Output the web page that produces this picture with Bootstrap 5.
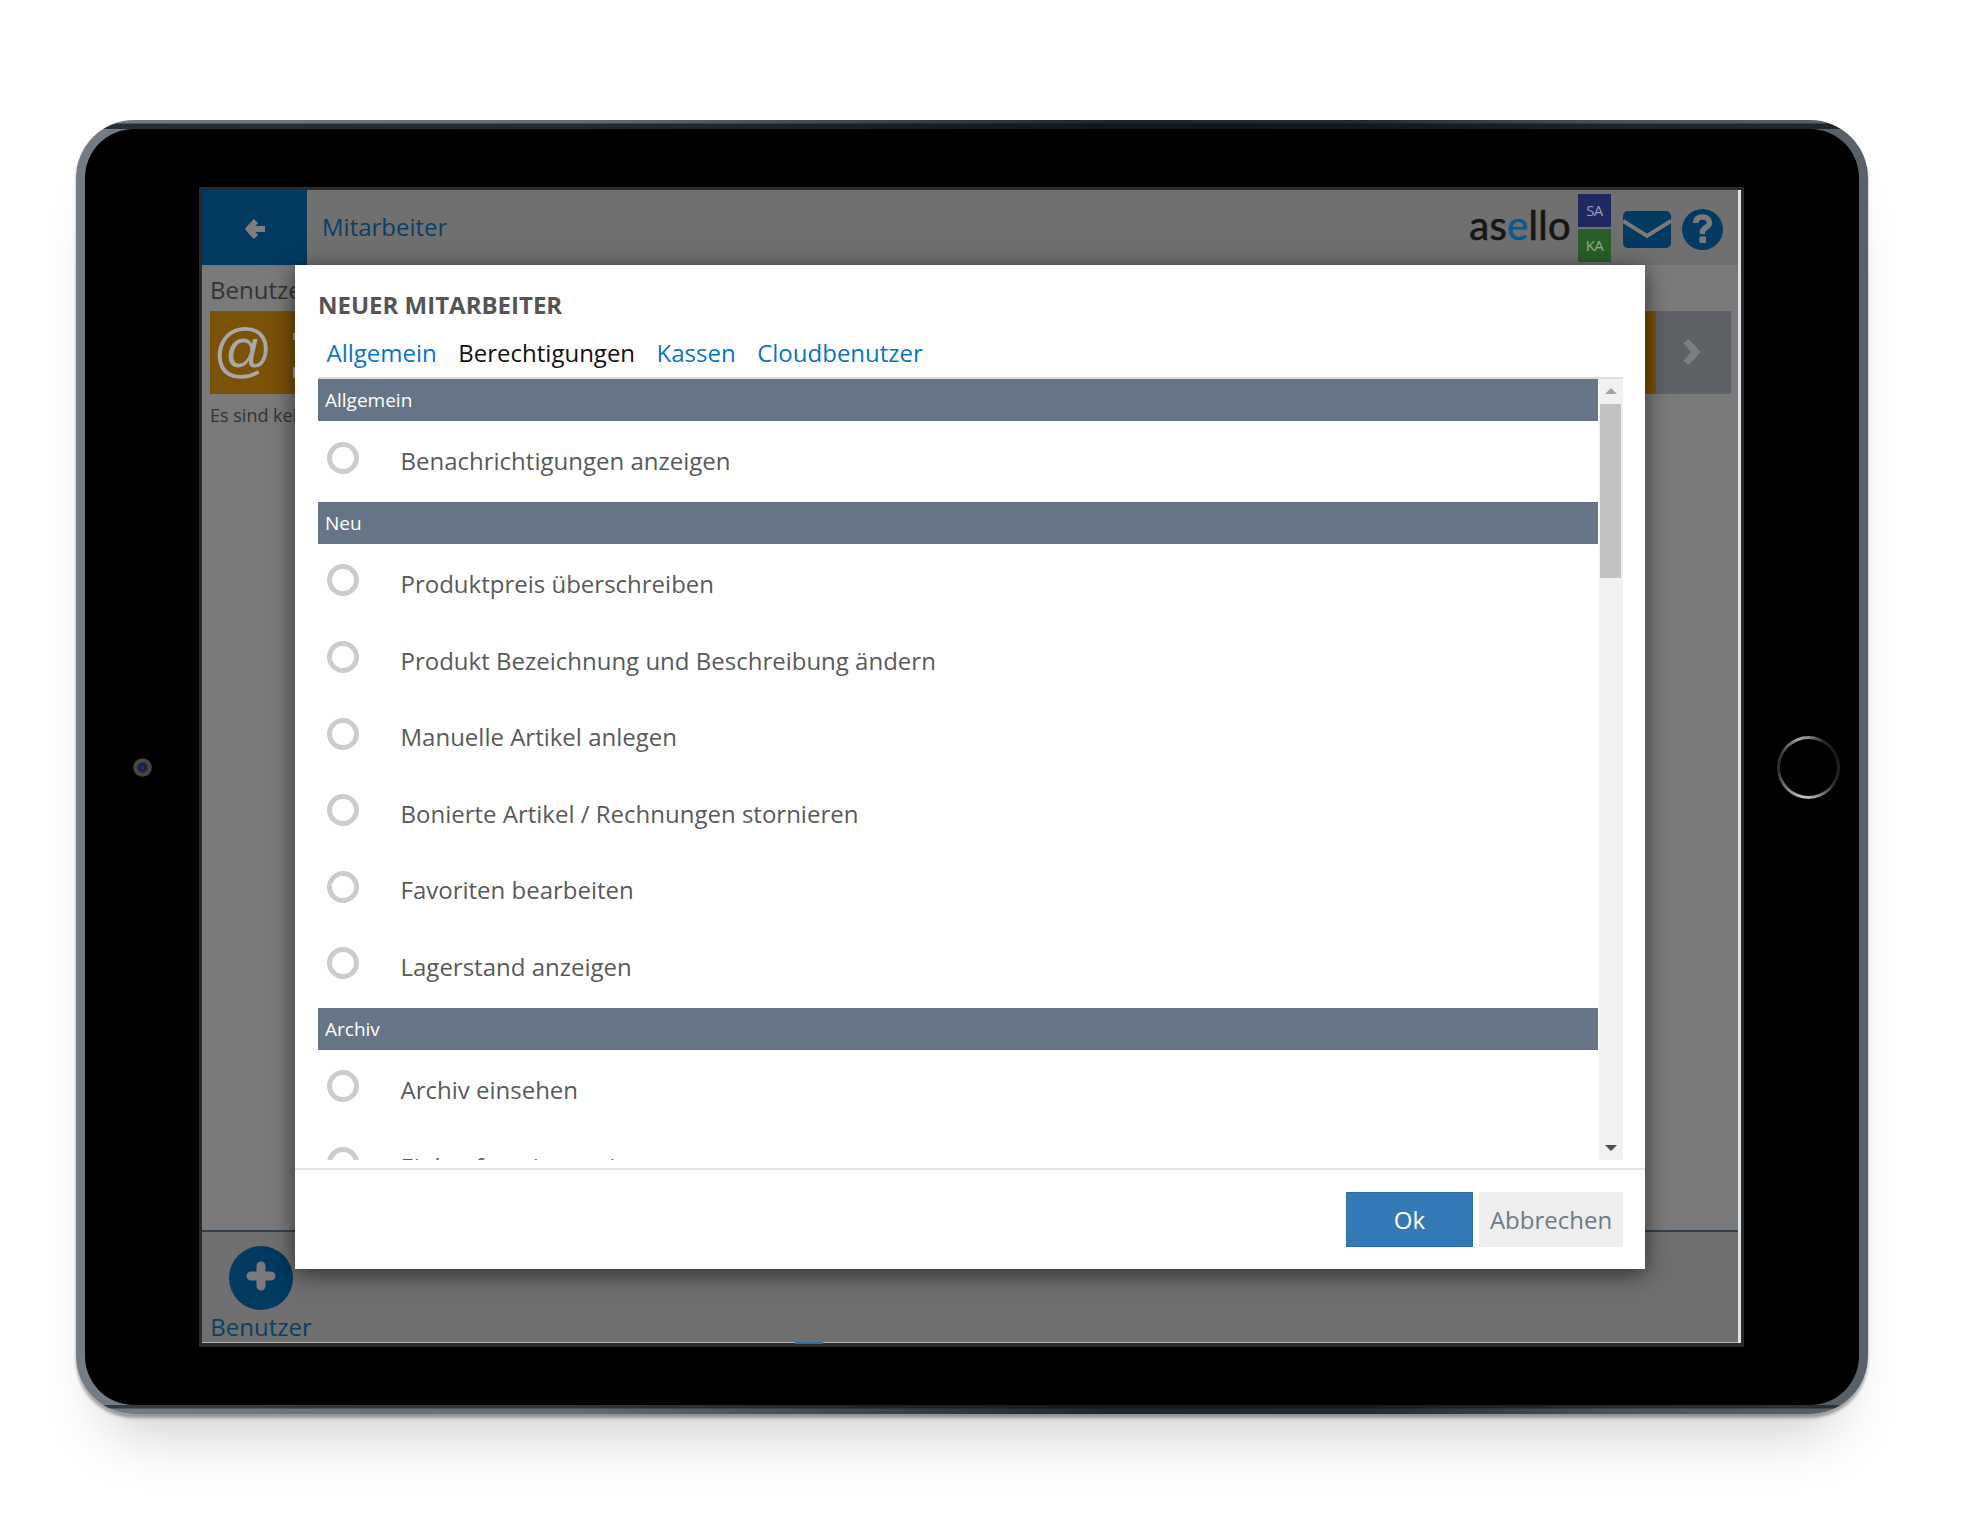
<!DOCTYPE html>
<html lang="de">
<head>
    <meta charset="UTF-8">
    <title>Neuer Mitarbeiter</title>
    <link href="https://cdn.jsdelivr.net/npm/bootstrap@5.3.0/dist/css/bootstrap.min.css" rel="stylesheet">
    <style>
        body { background: #fff; font-family: "Open Sans", sans-serif; height: 1531px; overflow: hidden; }

        /* tablet frame */
        .tablet {
            width: 1792px; height: 1294px; margin: 120px 0 0 76px;
            border: 9px solid transparent; border-radius: 58px;
            background:
                linear-gradient(#000, #000) padding-box,
                linear-gradient(180deg, transparent 3px, rgba(12,16,20,.72) 4px, rgba(12,16,20,.72) 9px, transparent 9px, transparent calc(100% - 9px), rgba(12,16,20,.6) calc(100% - 9px), rgba(12,16,20,.6) calc(100% - 6px), transparent calc(100% - 5px)) border-box,
                linear-gradient(90deg, #747d85 0%, #646c73 28%, #1c252d 58%, #222b33 72%, #4c535a 86%, #5a6168 100%) border-box;
            box-shadow: 0 4px 3px rgba(0,0,0,.32), 0 48px 60px -30px rgba(0,0,0,.2);
        }
        .cam-slot { width: 114px; }
        .cam {
            width: 19px; height: 19px; border-radius: 50%;
            background: radial-gradient(closest-side, #14347a 0 18%, #0e1730 34%, #333 48%, #4e4e4e 78%, #2c2c2c 100%);
        }
        .home-slot { width: 101px; padding-left: 33px; }
        .home-btn {
            width: 63px; height: 63px; border-radius: 50%; border: 3px solid transparent;
            background: linear-gradient(#000, #000) padding-box,
                conic-gradient(#8c8c8c 0deg, #2a2a2a 30deg, #161616 60deg, #2c2c2c 125deg, #9a9a9a 165deg, #c4c4c4 190deg, #777 230deg, #2a2a2a 265deg, #333 295deg, #a0a0a0 340deg, #8c8c8c 360deg) border-box;
        }

        /* screen */
        .screen { width: 1545px; height: 1160px; flex: none; border: 3px solid #2a2a2a; border-bottom-width: 4px; background: #7a7a7a; }
        .screen-edge { width: 3px; background: #dfe3e8; }
        .app-bar { height: 75px; background: #707070; }
        .back-btn { width: 105px; padding: 3px 0 0 2px; background: #023a60; }
        .app-title { color: #0a3e63; font-size: 24px; margin-left: 15px; padding-bottom: 2px; }
        .logo-text { font-family: Lato, sans-serif; font-size: 40px; line-height: 1; color: #161616; margin-top: -6px; letter-spacing: .3px; -webkit-text-stroke: .7px currentColor; }
        .logo-e { color: #0a5a8c; }
        .store-tag { width: 33px; height: 33px; font-size: 15px; letter-spacing: -.5px; }
        .tag-sa { background: #20295f; color: #9a9ab4; }
        .tag-ka { background: #2a5f2a; color: #98a898; }
        .tag-stack { gap: 2px; margin-left: 7px; }
        .mail-icon { margin: 5px 0 0 12px; }
        .help-icon { margin: 4px 15px 0 11px; }
        .user-head { height: 46px; padding: 9px 0 0 8px; font-size: 24px; line-height: 32px; color: #333; white-space: nowrap; }
        .user-tile { height: 83px; margin: 0 7px 0 8px; }
        .tile-main { background: #7a5208; color: #a8a8a8; overflow: hidden; }
        .at-sign { font-family: "Liberation Sans", sans-serif; font-size: 59px; line-height: 79px; width: 83px; padding-left: 3px; }
        .tile-frag { width: 2px; background: #a8a8a8; }
        .frag-a { height: 7px; margin-top: 22px; }
        .frag-b { height: 11px; margin-top: 27px; }
        .tile-next { width: 75px; padding: 0 4px 2px 0; background: #5e6166; }
        .empty-note { font-size: 18px; color: #333; padding: 8px 0 0 8px; white-space: nowrap; }
        .app-foot { height: 112px; background: #707070; border-top: 2px solid #33414f; }
        .add-item { width: 104px; margin-left: 7px; padding-top: 14px; }
        .add-btn { width: 64px; height: 64px; border-radius: 50%; background: #023a60; }
        .add-plus { margin-top: -4px; }
        .add-label { color: #0a3e63; font-size: 24px; line-height: 32px; margin-top: 1px; }
        .screen-line { height: 1px; background: #b4b4b4; }
        .line-active { width: 28px; margin-left: 593px; height: 2px; background: #2f6ea5; }

        /* dialog */
        .dialog { position: absolute; left: 93px; top: 75px; width: 1350px; height: 1004px; background: #fff; box-shadow: 0 5px 22px rgba(0,0,0,.6); }
        .dialog-head { padding: 0 23px; height: 112px; }
        .dialog-title { font-size: 24px; font-weight: 700; color: #555; line-height: 30px; padding-top: 25px; margin: 0; }
        .tab-links { margin: 15px 0 0 -2.25px; }
        .tab-links .nav-link { padding: 0 10.75px; font-size: 24px; line-height: 35px; color: #0a75c2; }
        .tab-links .nav-link.active { color: #111; }
        .perm-box { height: 783px; margin: 0 22px 0 23px; border-top: 2px solid #ddd; }
        .perm-list { width: 1280px; overflow: hidden; }
        .perm-head { height: 42px; background: #667586; color: #fff; font-size: 19px; line-height: 42px; padding-left: 7px; }
        .perm-group { padding-bottom: 4.4px; }
        .perm-row { height: 76.6px; padding: 20.5px 0 0 9px; gap: 41.5px; }
        .perm-radio { width: 32px; height: 32px; margin: 0; flex: none; border: 5px solid #ccc; }
        .perm-label { font-size: 24px; line-height: 32px; margin-top: 3.6px; color: #5a5a5a; }
        .scroll-track { width: 24px; margin-left: 1px; background: #f1f1f1; }
        .scroll-up { height: 25px; padding-top: 9px; }
        .scroll-thumb { width: 21px; height: 174px; margin-right: 2px; background: #c1c1c1; }
        .arrow-up { width: 0; border: 6px solid transparent; border-top: 0; border-bottom-color: #a3a3a3; }
        .arrow-down { width: 0; border: 6px solid transparent; border-bottom: 0; border-top-color: #505050; margin-bottom: 9px; }
        .dialog-rule { height: 2px; margin-top: 8px; background: #e5e5e5; }
        .dialog-foot { padding: 22px 22px 0 0; gap: 6px; }
        .btn-ok, .btn-cancel { height: 55px; font-size: 24px; border-radius: 0; padding: 0; }
        .btn-ok { width: 127px; --bs-btn-bg: #337ab7; --bs-btn-border-color: #2e6da4; }
        .btn-cancel { width: 144px; background: #eee; color: #6c7b8a; border-color: #eee; }
    </style>
</head>
<body>
    <div class="tablet d-flex align-items-center">
        <div class="cam-slot d-flex justify-content-center"><div class="cam"></div></div>

        <div class="screen position-relative d-flex">
            <div class="flex-grow-1 d-flex flex-column">
                <div class="app-bar d-flex align-items-stretch">
                    <div class="back-btn d-flex align-items-center justify-content-center">
                        <svg width="22" height="22" viewBox="0 0 22 22"><path d="M11 3 3.5 11 11 19M4.5 11H20" fill="none" stroke="#7e7e7e" stroke-width="6" stroke-linejoin="round"/></svg>
                    </div>
                    <div class="app-title d-flex align-items-center">Mitarbeiter</div>
                    <div class="ms-auto d-flex align-items-center">
                        <div class="logo-text"><span>as</span><span class="logo-e">e</span><span>llo</span></div>
                        <div class="tag-stack d-flex flex-column">
                            <div class="store-tag tag-sa d-flex align-items-center justify-content-center">SA</div>
                            <div class="store-tag tag-ka d-flex align-items-center justify-content-center">KA</div>
                        </div>
                        <svg class="mail-icon" width="48" height="38" viewBox="0 0 48 38"><rect width="48" height="37" rx="5" fill="#023a60"/><path d="M0 10 24 25 48 10" fill="none" stroke="#7a7a7a" stroke-width="4"/></svg>
                        <svg class="help-icon" width="41" height="41" viewBox="0 0 41 41"><circle cx="20.5" cy="20.5" r="20.5" fill="#023a60"/><path d="M13.5 14C14 9.5 17 8 20.5 8 24.5 8 27.5 10.5 27.5 14 27.5 18 21.5 18 20.5 22.5V25" fill="none" stroke="#7a7a7a" stroke-width="5.5"/><rect x="17.5" y="27.5" width="6.5" height="6.5" fill="#7a7a7a"/></svg>
                    </div>
                </div>

                <div class="flex-grow-1">
                    <div class="user-head">Benutzer</div>
                    <div class="user-tile d-flex">
                        <div class="tile-main flex-grow-1 d-flex">
                            <div class="at-sign">@</div>
                            <div class="d-flex flex-column">
                                <div class="tile-frag frag-a"></div>
                                <div class="tile-frag frag-b"></div>
                            </div>
                        </div>
                        <div class="tile-next d-flex align-items-center justify-content-center">
                            <svg width="20" height="28" viewBox="0 0 20 28"><path d="M4 3 14 14 4 25" fill="none" stroke="#7e7e7e" stroke-width="7"/></svg>
                        </div>
                    </div>
                    <div class="empty-note">Es sind keine Benutzer vorhanden</div>
                </div>

                <div class="app-foot">
                    <div class="add-item d-flex flex-column align-items-center">
                        <div class="add-btn d-flex align-items-center justify-content-center">
                            <svg class="add-plus" width="30" height="30" viewBox="0 0 30 30"><path d="M15 5V25M5 15H25" stroke="#7a7a7a" stroke-width="9" stroke-linecap="round"/></svg>
                        </div>
                        <div class="add-label">Benutzer</div>
                    </div>
                </div>
                <div class="screen-line"><div class="line-active"></div></div>
            </div>
            <div class="screen-edge"></div>

            <!-- dialog -->
            <div class="dialog d-flex flex-column">
                <div class="dialog-head">
                    <h5 class="dialog-title">NEUER MITARBEITER</h5>
                    <ul class="nav tab-links">
                        <li class="nav-item"><a class="nav-link" href="#">Allgemein</a></li>
                        <li class="nav-item"><a class="nav-link active" href="#">Berechtigungen</a></li>
                        <li class="nav-item"><a class="nav-link" href="#">Kassen</a></li>
                        <li class="nav-item"><a class="nav-link" href="#">Cloudbenutzer</a></li>
                    </ul>
                </div>
                <div class="perm-box d-flex">
                    <div class="perm-list" id="permList"></div>
                    <div class="scroll-track d-flex flex-column align-items-center">
                        <div class="scroll-up"><div class="arrow-up"></div></div>
                        <div class="scroll-thumb"></div>
                        <div class="arrow-down mt-auto"></div>
                    </div>
                </div>
                <div class="dialog-rule"></div>
                <div class="dialog-foot d-flex justify-content-end">
                    <button type="button" class="btn btn-primary btn-ok">Ok</button>
                    <button type="button" class="btn btn-cancel">Abbrechen</button>
                </div>
            </div>
        </div>

        <div class="home-slot"><div class="home-btn"></div></div>
    </div>

    <script src="https://cdn.jsdelivr.net/npm/bootstrap@5.3.0/dist/js/bootstrap.bundle.min.js"></script>
    <script>
        // permission groups
        const groups = [
            ['Allgemein', ['Benachrichtigungen anzeigen']],
            ['Neu', ['Produktpreis überschreiben', 'Produkt Bezeichnung und Beschreibung ändern', 'Manuelle Artikel anlegen',
                'Bonierte Artikel / Rechnungen stornieren', 'Favoriten bearbeiten', 'Lagerstand anzeigen']],
            ['Archiv', ['Archiv einsehen', 'Einkaufspreis anzeigen']]
        ];
        let html = '';
        groups.forEach(g => {
            html += `<div class="perm-head">${g[0]}</div><div class="perm-group">`;
            g[1].forEach(label => {
                html += `<label class="perm-row d-flex"><input class="form-check-input perm-radio" type="radio"><span class="perm-label">${label}</span></label>`;
            });
            html += '</div>';
        });
        document.getElementById('permList').innerHTML = html;
    </script>
</body>
</html>
